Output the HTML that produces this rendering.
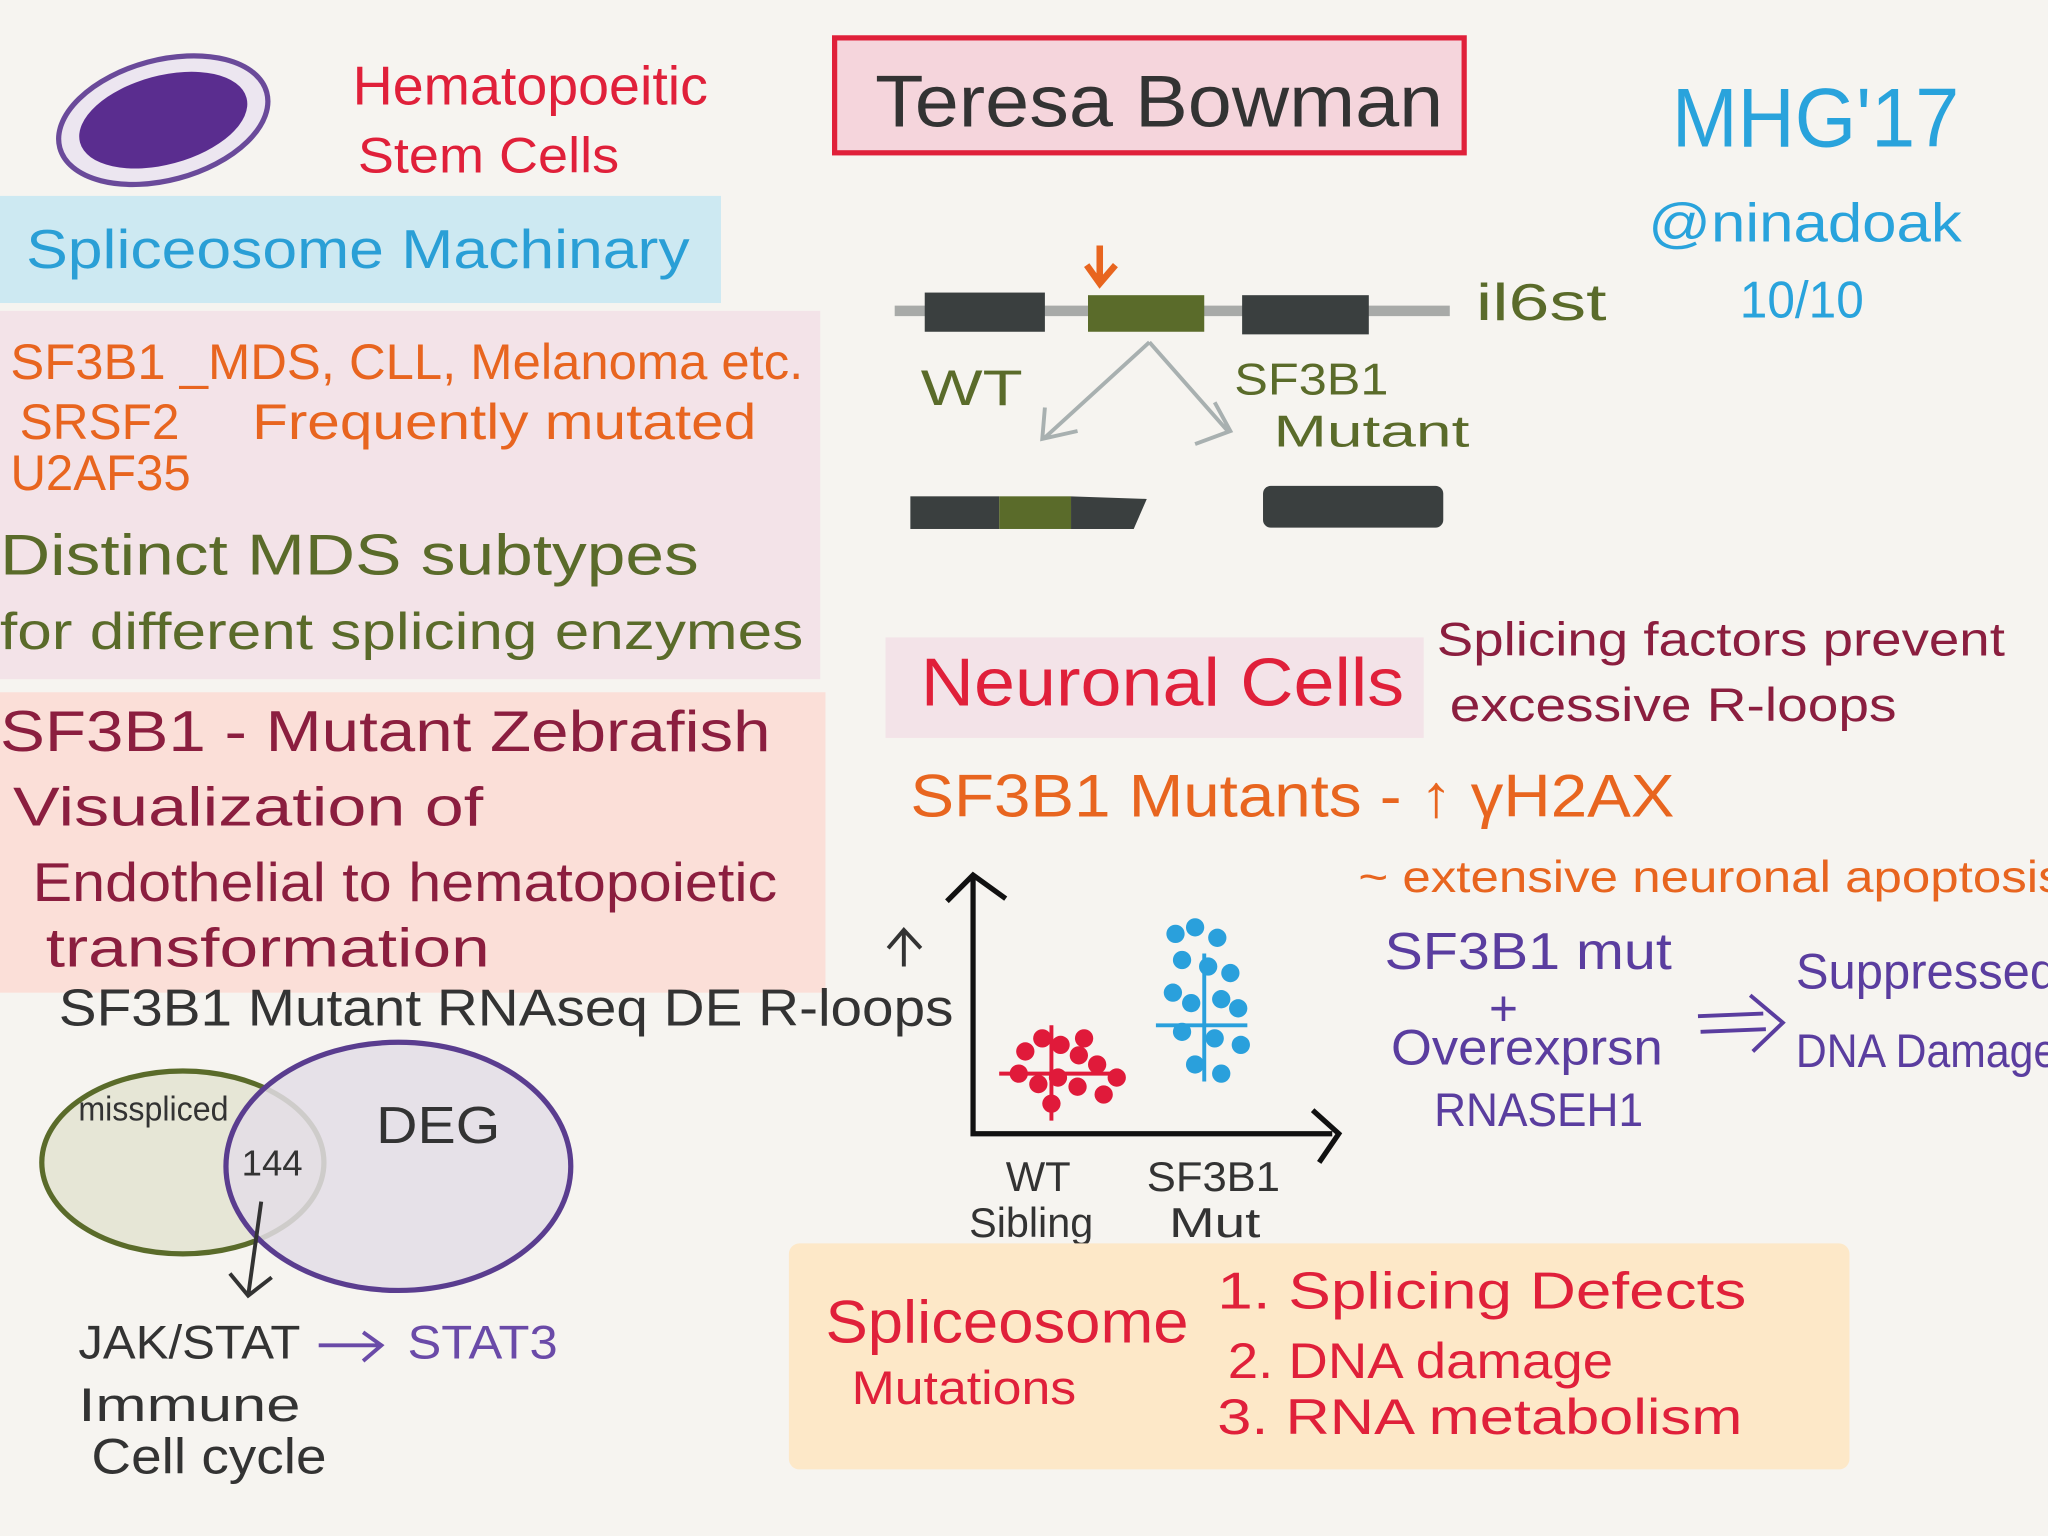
<!DOCTYPE html>
<html><head><meta charset="utf-8"><style>
html,body{margin:0;padding:0;background:#f6f4f0;overflow:hidden}
svg{display:block}
text{font-family:"Liberation Sans",sans-serif}
</style></head><body>
<svg width="2048" height="1536" viewBox="0 0 1568 1176" xmlns="http://www.w3.org/2000/svg">
<rect width="1568" height="1176" fill="#f6f4f0"/>
<ellipse cx="125" cy="92" rx="82" ry="46" transform="rotate(-15 125 92)" fill="#ece6f0" stroke="#6a4a9a" stroke-width="4"/>
<ellipse cx="125" cy="92" rx="66" ry="34" transform="rotate(-15 125 92)" fill="#5a2d8f"/>
<text x="270" y="80" font-size="42" fill="#e0203a" textLength="272" lengthAdjust="spacingAndGlyphs">Hematopoeitic</text>
<text x="274" y="132" font-size="38" fill="#e0203a" textLength="200" lengthAdjust="spacingAndGlyphs">Stem Cells</text>
<rect x="639" y="29" width="482" height="88" fill="#f5d5dc" stroke="#e0203a" stroke-width="4"/>
<text x="670" y="97" font-size="56" fill="#333" textLength="435" lengthAdjust="spacingAndGlyphs">Teresa Bowman</text>
<text x="1280" y="112" font-size="64" fill="#29a3dc" textLength="220" lengthAdjust="spacingAndGlyphs">MHG'17</text>
<text x="1262" y="185" font-size="42" fill="#29a3dc" textLength="240" lengthAdjust="spacingAndGlyphs">@ninadoak</text>
<text x="1332" y="243" font-size="40" fill="#29a3dc" textLength="95" lengthAdjust="spacingAndGlyphs">10/10</text>
<rect x="0" y="150" width="552" height="82" fill="#cde9f2"/>
<text x="20" y="205" font-size="42" fill="#2a9fd6" textLength="508" lengthAdjust="spacingAndGlyphs">Spliceosome Machinary</text>
<rect x="0" y="238" width="628" height="282" fill="#f3e3e8"/>
<text x="8" y="290" font-size="38" fill="#e8651f" textLength="607" lengthAdjust="spacingAndGlyphs">SF3B1 _MDS, CLL, Melanoma etc.</text>
<text x="15" y="336" font-size="38" fill="#e8651f">SRSF2</text>
<text x="193" y="336" font-size="38" fill="#e8651f" textLength="386" lengthAdjust="spacingAndGlyphs">Frequently mutated</text>
<text x="8" y="375" font-size="38" fill="#e8651f" textLength="138" lengthAdjust="spacingAndGlyphs">U2AF35</text>
<text x="0" y="440" font-size="44" fill="#5a6b2a" textLength="535" lengthAdjust="spacingAndGlyphs">Distinct MDS subtypes</text>
<text x="0" y="497" font-size="40" fill="#5a6b2a" textLength="615" lengthAdjust="spacingAndGlyphs">for different splicing enzymes</text>
<rect x="0" y="530" width="632" height="230" fill="#fbdfd8"/>
<text x="0" y="575" font-size="44" fill="#8b1e3f" textLength="590" lengthAdjust="spacingAndGlyphs">SF3B1 - Mutant Zebrafish</text>
<text x="10" y="632" font-size="42" fill="#8b1e3f" textLength="360" lengthAdjust="spacingAndGlyphs">Visualization of</text>
<text x="25" y="690" font-size="42" fill="#8b1e3f" textLength="570" lengthAdjust="spacingAndGlyphs">Endothelial to hematopoietic</text>
<text x="35" y="740" font-size="42" fill="#8b1e3f" textLength="340" lengthAdjust="spacingAndGlyphs">transformation</text>
<text x="45" y="785" font-size="40" fill="#333" textLength="685" lengthAdjust="spacingAndGlyphs">SF3B1 Mutant RNAseq DE R-loops</text>
<path d="M692 740 L692 712 M680 726 L692 712 L705 726" stroke="#333" stroke-width="3" fill="none"/>
<ellipse cx="140" cy="890" rx="108" ry="70" fill="#e6e6d6" stroke="#5a6b2a" stroke-width="4"/>
<ellipse cx="305" cy="893" rx="132" ry="95" fill="#e3dde6" fill-opacity="0.85" stroke="#5a3d8f" stroke-width="4"/>
<text x="60" y="858" font-size="26" fill="#333" textLength="115" lengthAdjust="spacingAndGlyphs">misspliced</text>
<text x="288" y="875" font-size="40" fill="#333" textLength="95" lengthAdjust="spacingAndGlyphs">DEG</text>
<text x="185" y="900" font-size="28" fill="#333">144</text>
<path d="M200 920 L190 992 M176 975 L190 992 L208 978" stroke="#333" stroke-width="3" fill="none"/>
<text x="60" y="1040" font-size="36" fill="#333" textLength="170" lengthAdjust="spacingAndGlyphs">JAK/STAT</text>
<path d="M244 1030 L290 1030 M278 1020 L292 1030 L278 1042" stroke="#6a4aa8" stroke-width="3" fill="none"/>
<text x="312" y="1040" font-size="36" fill="#6a4aa8" textLength="115" lengthAdjust="spacingAndGlyphs">STAT3</text>
<text x="60" y="1088" font-size="36" fill="#333" textLength="170" lengthAdjust="spacingAndGlyphs">Immune</text>
<text x="70" y="1128" font-size="38" fill="#333" textLength="180" lengthAdjust="spacingAndGlyphs">Cell cycle</text>
<line x1="685" y1="238" x2="1110" y2="238" stroke="#a8aaa8" stroke-width="8"/>
<rect x="708" y="224" width="92" height="30" fill="#3a3f3f"/>
<rect x="833" y="226" width="89" height="28" fill="#5a6b2a"/>
<rect x="951" y="226" width="97" height="30" fill="#3a3f3f"/>
<path d="M842 188 L842 215 M832 203 L842 217 L854 203" stroke="#e8651f" stroke-width="5" fill="none"/>
<text x="1130" y="245" font-size="40" fill="#5a6b2a" textLength="100" lengthAdjust="spacingAndGlyphs">il6st</text>
<text x="705" y="310" font-size="38" fill="#5a6b2a" textLength="78" lengthAdjust="spacingAndGlyphs">WT</text>
<text x="945" y="302" font-size="34" fill="#5a6b2a" textLength="118" lengthAdjust="spacingAndGlyphs">SF3B1</text>
<text x="975" y="342" font-size="34" fill="#5a6b2a" textLength="150" lengthAdjust="spacingAndGlyphs">Mutant</text>
<path d="M880 262 L800 335 M800 312 L798 336 L825 330 M880 262 L940 330 M915 340 L942 330 L930 308" stroke="#a8b0b0" stroke-width="3" fill="none"/>
<rect x="697" y="380" width="68" height="25" fill="#3a3f3f"/>
<rect x="765" y="380" width="55" height="25" fill="#5a6b2a"/>
<path d="M820 380 L878 382 L868 405 L820 405Z" fill="#3a3f3f"/>
<rect x="967" y="372" width="138" height="32" rx="6" fill="#3a3f3f"/>
<rect x="678" y="488" width="412" height="77" fill="#f3e3e8"/>
<text x="705" y="540" font-size="52" fill="#e0203a" textLength="370" lengthAdjust="spacingAndGlyphs">Neuronal Cells</text>
<text x="1100" y="502" font-size="36" fill="#8b1e3f" textLength="435" lengthAdjust="spacingAndGlyphs">Splicing factors prevent</text>
<text x="1110" y="552" font-size="36" fill="#8b1e3f" textLength="342" lengthAdjust="spacingAndGlyphs">excessive R-loops</text>
<text x="697" y="625" font-size="46" fill="#e8651f" textLength="585" lengthAdjust="spacingAndGlyphs">SF3B1 Mutants - ↑ γH2AX</text>
<text x="1040" y="683" font-size="34" fill="#e8651f" textLength="540" lengthAdjust="spacingAndGlyphs">~ extensive neuronal apoptosis</text>
<path d="M745 672 L745 868 L1020 868 M725 690 L745 670 L770 688 M1005 850 L1025 868 L1010 890" stroke="#111" stroke-width="4" fill="none"/>
<g fill="#e01a3a">
<circle cx="785" cy="805" r="7"/><circle cx="798" cy="795" r="7"/><circle cx="812" cy="800" r="7"/><circle cx="826" cy="808" r="7"/><circle cx="840" cy="815" r="7"/><circle cx="780" cy="822" r="7"/><circle cx="795" cy="830" r="7"/><circle cx="810" cy="825" r="7"/><circle cx="825" cy="832" r="7"/><circle cx="845" cy="838" r="7"/><circle cx="855" cy="825" r="7"/><circle cx="805" cy="845" r="7"/><circle cx="830" cy="795" r="7"/>
</g>
<path d="M765 822 L855 822 M805 785 L805 858" stroke="#e01a3a" stroke-width="3"/>
<g fill="#2aa0dc">
<circle cx="900" cy="715" r="7"/><circle cx="915" cy="710" r="7"/><circle cx="932" cy="718" r="7"/><circle cx="905" cy="735" r="7"/><circle cx="925" cy="740" r="7"/><circle cx="942" cy="745" r="7"/><circle cx="898" cy="760" r="7"/><circle cx="912" cy="768" r="7"/><circle cx="935" cy="765" r="7"/><circle cx="948" cy="772" r="7"/><circle cx="905" cy="790" r="7"/><circle cx="930" cy="795" r="7"/><circle cx="950" cy="800" r="7"/><circle cx="915" cy="815" r="7"/><circle cx="935" cy="822" r="7"/>
</g>
<path d="M885 785 L955 785 M922 730 L922 828" stroke="#2aa0dc" stroke-width="3"/>
<text x="770" y="912" font-size="32" fill="#333">WT</text>
<text x="742" y="947" font-size="32" fill="#333" textLength="95" lengthAdjust="spacingAndGlyphs">Sibling</text>
<text x="878" y="912" font-size="32" fill="#333" textLength="102" lengthAdjust="spacingAndGlyphs">SF3B1</text>
<text x="895" y="947" font-size="32" fill="#333" textLength="70" lengthAdjust="spacingAndGlyphs">Mut</text>
<text x="1060" y="742" font-size="40" fill="#5a3d9f" textLength="220" lengthAdjust="spacingAndGlyphs">SF3B1 mut</text>
<text x="1140" y="785" font-size="38" fill="#5a3d9f">+</text>
<text x="1065" y="815" font-size="38" fill="#5a3d9f" textLength="208" lengthAdjust="spacingAndGlyphs">Overexprsn</text>
<text x="1098" y="862" font-size="36" fill="#5a3d9f" textLength="160" lengthAdjust="spacingAndGlyphs">RNASEH1</text>
<path d="M1300 778 L1350 776 M1302 790 L1352 788 M1340 762 L1365 783 L1342 805" stroke="#5a3d9f" stroke-width="3" fill="none"/>
<text x="1375" y="757" font-size="38" fill="#5a3d9f" textLength="200" lengthAdjust="spacingAndGlyphs">Suppressed</text>
<text x="1375" y="817" font-size="36" fill="#5a3d9f" textLength="200" lengthAdjust="spacingAndGlyphs">DNA Damage</text>
<rect x="604" y="952" width="812" height="173" rx="8" fill="#fde8c8"/>
<text x="632" y="1028" font-size="46" fill="#e0203a" textLength="278" lengthAdjust="spacingAndGlyphs">Spliceosome</text>
<text x="652" y="1075" font-size="36" fill="#e0203a" textLength="172" lengthAdjust="spacingAndGlyphs">Mutations</text>
<text x="932" y="1002" font-size="40" fill="#e0203a" textLength="405" lengthAdjust="spacingAndGlyphs">1. Splicing Defects</text>
<text x="940" y="1055" font-size="38" fill="#e0203a" textLength="295" lengthAdjust="spacingAndGlyphs">2. DNA damage</text>
<text x="932" y="1098" font-size="38" fill="#e0203a" textLength="402" lengthAdjust="spacingAndGlyphs">3. RNA metabolism</text>
</svg>
</body></html>
